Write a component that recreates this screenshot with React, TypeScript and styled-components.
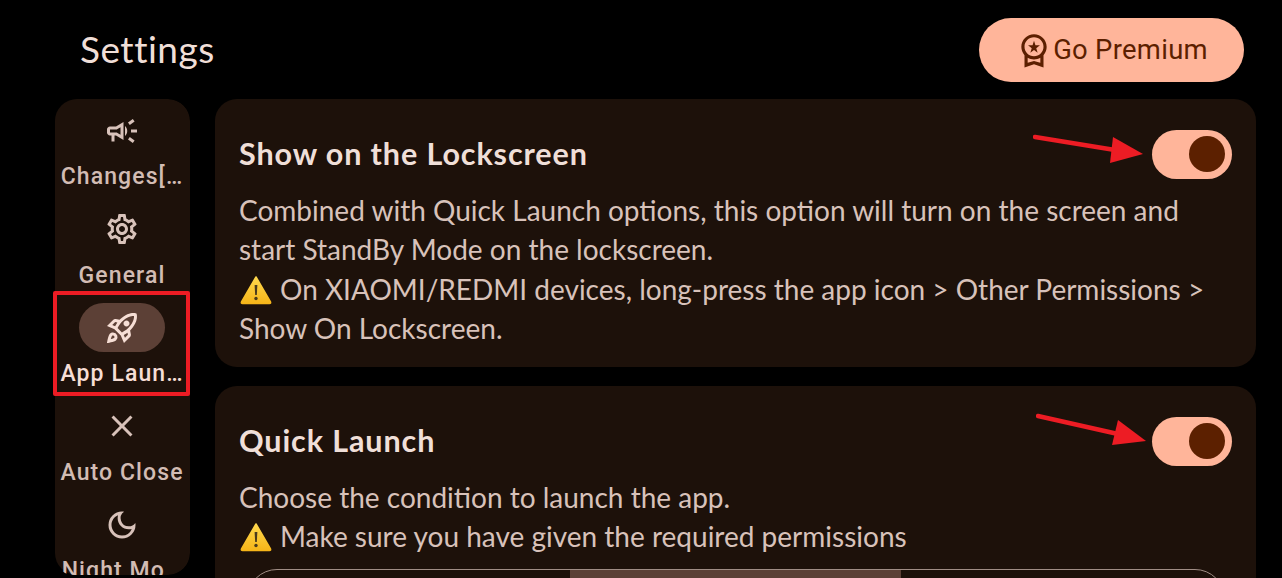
import React from 'react';
import styled, { createGlobalStyle } from 'styled-components';
import {
    MdClose,
    MdOutlineDarkMode,
    MdOutlineCampaign,
    MdOutlineRocketLaunch,
    MdOutlineSettings,
    MdOutlineWorkspacePremium,
} from 'react-icons/md';

const GlobalStyle = createGlobalStyle`
    html, body {
        margin: 0;
        height: 578px;
        overflow: hidden;
        background: #000;
    }
`;

const Page = styled.div`
    width: 1282px;
    height: 578px;
    overflow: hidden;
    font-family: Lato, sans-serif;
`;

const Header = styled.header`
    height: 99px;
    box-sizing: border-box;
    padding: 18px 38px 17px 80px;
    display: flex;
    align-items: center;
    justify-content: space-between;
`;

const Title = styled.h1`
    margin: 0 0 3px;
    font-family: Lato, sans-serif;
    font-size: 37px;
    font-weight: 400;
    letter-spacing: 0.500px;
    color: #f0dfd8;
`;

const PremiumButton = styled.button`
    width: 265px;
    height: 64px;
    border: 0;
    border-radius: 32px;
    padding: 0 0 1px;
    background: #ffb59a;
    color: #5c1f00;
    display: flex;
    align-items: center;
    justify-content: center;
    gap: 0;
    font-family: Roboto, sans-serif;
    font-size: 27.400px;
    font-weight: 400;
    letter-spacing: 0.300px;
`;

const Body = styled.main`
    display: flex;
    gap: 25px;
    padding: 0 26px 0 55px;
`;

const NavRail = styled.nav`
    width: 135px;
    height: 476px;
    flex-shrink: 0;
    border-radius: 22px;
    background: #1d110a;
    clip-path: inset(0 0 0 -3px round 22px);
    display: flex;
    flex-direction: column;
    align-items: center;
    padding-top: 7px;
    box-sizing: border-box;
`;

const NavItem = styled.div`
    position: relative;
    width: 135px;
    height: 98.500px;
    flex-shrink: 0;
    box-sizing: border-box;
    padding-right: 1px;
    display: flex;
    flex-direction: column;
    align-items: center;
`;

const IconPill = styled.div<{ $active?: boolean }>`
    width: 86px;
    height: 49px;
    border-radius: 25px;
    background: ${(p) => (p.$active ? '#5c4036' : 'transparent')};
    color: ${(p) => (p.$active ? '#f6ded5' : '#d8c2ba')};
    display: flex;
    align-items: center;
    justify-content: center;
    font-size: 36px;
`;

const NavLabel = styled.span<{ $active?: boolean }>`
    width: 124px;
    margin-top: 5px;
    text-align: center;
    white-space: nowrap;
    font-family: Roboto, sans-serif;
    font-size: 23px;
    line-height: 34px;
    font-weight: 500;
    letter-spacing: 1.100px;
    color: ${(p) => (p.$active ? '#f6ded5' : '#d2bcb4')};
`;

const RedFrame = styled.div`
    position: absolute;
    left: -2px;
    right: 0;
    top: -12px;
    bottom: 6px;
    border: 4px solid #ed1c24;
    border-radius: 2px;
`;

const Cards = styled.section`
    flex: 1;
    min-width: 0;
    display: flex;
    flex-direction: column;
    gap: 19px;
`;

const Card = styled.article`
    position: relative;
    box-sizing: border-box;
    min-height: 268px;
    padding: 30px 24px 0 25px;
    border-radius: 22px;
    background: #1d110a;
`;

const CardHead = styled.div`
    display: flex;
    align-items: center;
    justify-content: space-between;
    height: 50px;
`;

const CardTitle = styled.h2`
    margin: 0 0 2px -1px;
    font-family: Lato, sans-serif;
    font-size: 30.500px;
    font-weight: 700;
    letter-spacing: 0.900px;
    color: #f0dfd8;
`;

const Toggle = styled.div`
    width: 80px;
    height: 49px;
    border-radius: 25px;
    background: #ffb59a;
    display: flex;
    align-items: center;
    justify-content: flex-end;
    padding-right: 7px;
    box-sizing: border-box;
`;

const Knob = styled.div`
    width: 36px;
    height: 36px;
    border-radius: 50%;
    background: #5c2000;
`;

const CardText = styled.p`
    margin: 12px 0 0 -1px;
    font-family: Lato, sans-serif;
    font-size: 28px;
    line-height: 39.300px;
    font-weight: 400;
    color: #d8c2ba;
`;

const Warn = styled.svg`
    width: 32px;
    height: 30px;
    vertical-align: -5px;
    margin: 0 8px 0 1px;
`;

const Arrow = styled.svg`
    position: absolute;
    pointer-events: none;
`;

const Segments = styled.div`
    display: grid;
    grid-template-columns: 322px 331px 1fr;
    height: 60px;
    margin: 12px 7px 0;
    border: 1.500px solid #a08d85;
    border-radius: 30px;
    overflow: hidden;
`;

const Segment = styled.div<{ $active?: boolean }>`
    background: ${(p) => (p.$active ? '#5c4036' : 'transparent')};
`;

const WarningIcon = () => (
    <Warn viewBox="0 0 32 30">
        <defs>
            <linearGradient id="warnFill" x1="0" y1="0" x2="0" y2="1">
                <stop offset="0" stopColor="#ffd84d" />
                <stop offset="1" stopColor="#f6b519" />
            </linearGradient>
        </defs>
        <path d="M16 2 L30.5 27 Q31 28.500 29.500 28.500 L2.500 28.500 Q1 28.500 1.500 27 Z" fill="url(#warnFill)" stroke="url(#warnFill)" strokeWidth="1.500" strokeLinejoin="round" />
        <path d="M14.600 10 H17.400 L16.800 20 H15.200 Z" fill="#4a3a1c" />
        <circle cx="16" cy="23.500" r="1.700" fill="#4a3a1c" />
    </Warn>
);

const navItems = [
    { label: 'Changes[…', icon: <MdOutlineCampaign /> },
    { label: 'General', icon: <MdOutlineSettings /> },
    { label: 'App Laun…', icon: <MdOutlineRocketLaunch />, active: true },
    { label: 'Auto Close', icon: <MdClose /> },
    { label: 'Night Mo…', icon: <MdOutlineDarkMode /> },
];

const App: React.FC = () => {
    return (
        <Page>
            <GlobalStyle />
            <Header>
                <Title>Settings</Title>
                <PremiumButton>
                    <MdOutlineWorkspacePremium size={38} />
                    Go Premium
                </PremiumButton>
            </Header>
            <Body>
                <NavRail>
                    {navItems.map((item) => (
                        <NavItem key={item.label}>
                            <IconPill $active={item.active}>{item.icon}</IconPill>
                            <NavLabel $active={item.active}>{item.label}</NavLabel>
                            {item.active && <RedFrame />}
                        </NavItem>
                    ))}
                </NavRail>
                <Cards>
                    <Card>
                        <CardHead>
                            <CardTitle>Show on the Lockscreen</CardTitle>
                            <Toggle><Knob /></Toggle>
                        </CardHead>
                        <CardText>
                            Combined with Quick Launch options, this option will turn on the screen and
                            <br />
                            start StandBy Mode on the lockscreen.
                            <br />
                            <WarningIcon />
                            On XIAOMI/REDMI devices, long-press the app icon &gt; Other Permissions &gt;
                            <br />
                            Show On Lockscreen.
                        </CardText>
                        <Arrow width="112" height="30" viewBox="0 0 112 30" style={{ left: 818, top: 34 }}>
                            <path d="M2 4 L82 17" stroke="#ed1c24" strokeWidth="4.500" strokeLinecap="round" />
                            <path d="M80 4 L110 21 L77 30 Z" fill="#ed1c24" />
                        </Arrow>
                    </Card>
                    <Card>
                        <CardHead>
                            <CardTitle>Quick Launch</CardTitle>
                            <Toggle><Knob /></Toggle>
                        </CardHead>
                        <CardText>
                            Choose the condition to launch the app.
                            <br />
                            <WarningIcon />
                            Make sure you have given the required permissions
                        </CardText>
                        <Segments>
                            <Segment />
                            <Segment $active />
                            <Segment />
                        </Segments>
                        <Arrow width="112" height="36" viewBox="0 0 112 36" style={{ left: 821, top: 26 }}>
                            <path d="M2 4 L82 22" stroke="#ed1c24" strokeWidth="4.500" strokeLinecap="round" />
                            <path d="M82 8 L110 29 L76 33 Z" fill="#ed1c24" />
                        </Arrow>
                    </Card>
                </Cards>
            </Body>
        </Page>
    );
};

export default App;
